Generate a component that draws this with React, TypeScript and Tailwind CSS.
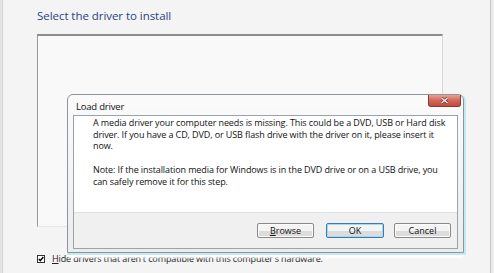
import React from 'react';

const font = { fontFamily: '"Open Sans", "Noto Sans", sans-serif' };

const Btn: React.FC<{ label: React.ReactNode; focused?: boolean; className?: string }> = ({ label, focused, className }) => (
  <div
    className={`h-[15px] w-[57px] rounded-[2px] border ${
      focused ? 'border-[#3d7bad] shadow-[inset_0_0_0_1px_#9fdcf3]' : 'border-[#8a8a8a] shadow-[inset_0_0_0_1px_#fbfbfb]'
    } bg-gradient-to-b from-[#f4f4f4] from-50% to-[#dcdcdc] to-50% flex items-center justify-center text-[9px] leading-none text-[#111] ${className ?? ''}`}
  >
    {label}
  </div>
);

const App: React.FC = () => {
  return (
    <div className="relative w-[494px] h-[273px] bg-[#f4f4f4] flex overflow-hidden" style={font}>
      <div className="w-[3px] bg-[#e4e4e4] border-r border-[#d6d6d6]" />

      <div className="flex-1 flex flex-col pl-[34px] pt-[8px]">
        <h1 className="text-[11.5px] leading-[15px] tracking-[-0.05px] text-[#2a3f88] font-normal">
          Select the driver to install
        </h1>

        <div className="mt-[11px] w-[406px] h-[193px] bg-[#f9f9f9] border-t-2 border-l border-t-[#8e8e8e] border-l-[#9a9a9a] border-r border-b border-r-[#d9d9d9] border-b-[#e6e6e6]" />

        <div className="mt-[26px] flex items-center gap-[7px]">
          <svg width="8" height="8" viewBox="0 0 8 8" className="shrink-0">
            <rect x="0.5" y="0.5" width="7" height="7" fill="#fff" stroke="#333" />
            <path d="M1.8 4 L3.3 5.6 L6.3 2" fill="none" stroke="#000" strokeWidth="1.4" />
          </svg>
          <span className="text-[9px] leading-[11px] tracking-[-0.12px] text-[#222] whitespace-nowrap">
            <span className="underline">H</span>ide drivers that aren't compatible with this computer's hardware.
          </span>
        </div>
      </div>

      <div className="w-[4px] bg-[#ececec] border-l border-[#c4c4c4]" />

      {/* Load driver dialog */}
      <div className="absolute left-[67px] top-[94px] w-[397px] h-[159px] rounded-t-[6px] border border-[#8d959c] bg-gradient-to-b from-[#fbfbfb] to-[#ececec] flex flex-col px-[5px] pb-[3px] shadow-[1px_1px_0_1px_#c2e9f4,0_6px_2px_-1px_rgba(255,255,255,0.95)]">
        <div className="h-[20px] flex justify-between">
          <span className="pl-[3px] pt-[6px] text-[9.5px] leading-[11px] tracking-[-0.2px] text-[#111]">Load driver</span>
          <div className="-mr-[3px] w-[33px] h-[12px] rounded-b-[3px] border border-t-0 border-[#8b3a2f] bg-gradient-to-b from-[#e7a294] via-[#d0675a] to-[#c24a3c] flex items-center justify-center">
            <svg width="9" height="7" viewBox="0 0 9 7">
              <path d="M1.5 1 L7.5 6 M7.5 1 L1.5 6" stroke="#6b2018" strokeWidth="2.4" />
              <path d="M1.5 1 L7.5 6 M7.5 1 L1.5 6" stroke="#fff" strokeWidth="1.3" />
            </svg>
          </div>
        </div>

        <div className="flex-1 flex flex-col border border-[#9ba3aa] bg-white">
          <div className="flex-1 pl-[19px] pt-[1px] text-[9px] leading-[11.7px] tracking-[-0.1px] text-[#111] whitespace-nowrap">
            <div>A media driver your computer needs is missing. This could be a DVD, USB or Hard disk</div>
            <div>driver. If you have a CD, DVD, or USB flash drive with the driver on it, please insert it</div>
            <div>now.</div>
            <div className="h-[11.7px]" />
            <div>Note: If the installation media for Windows is in the DVD drive or on a USB drive, you</div>
            <div>can safely remove it for this step.</div>
          </div>
          <div className="h-[36px] bg-[#f0f0f0] border-t border-[#dfdfdf] flex items-center justify-end pr-[6px]">
            <Btn label={<><span className="underline">B</span>rowse</>} />
            <Btn label="OK" focused className="ml-[12px] w-[58px]" />
            <Btn label="Cancel" className="ml-[10px]" />
          </div>
        </div>
      </div>
    </div>
  );
};

export default App;
